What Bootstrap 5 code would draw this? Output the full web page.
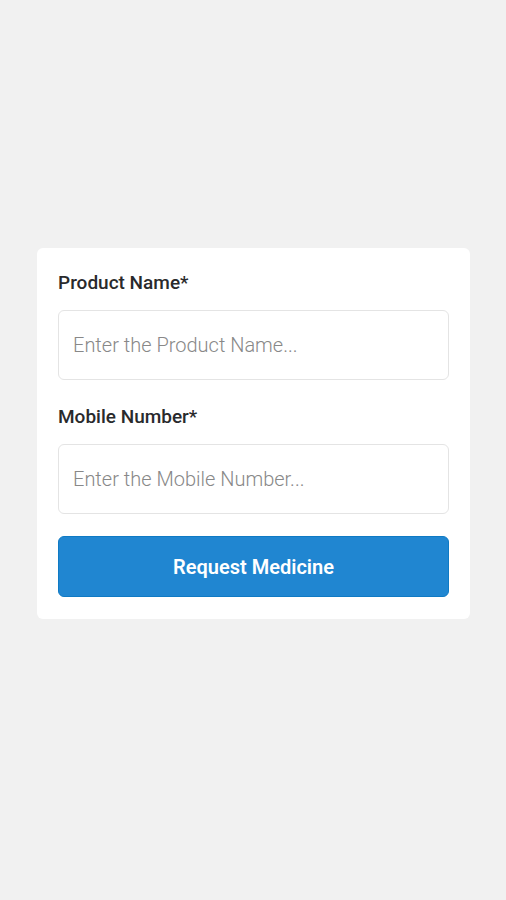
<!DOCTYPE html>
<html lang="en">
<head>
<meta charset="utf-8">
<meta name="viewport" content="width=device-width, initial-scale=1">
<title>Request Medicine</title>
<link rel="stylesheet" href="https://cdn.jsdelivr.net/npm/bootstrap@5.3.0/dist/css/bootstrap.min.css">
<style>
body { background: #f1f1f1; color: #292a2c; font-family: Roboto, "Liberation Sans", sans-serif; }
.page { padding: 248px 36px 0 37px; }
.request-card { padding: 20px 21px 22px; border-radius: 6px; }
.request-card .form-label { font-size: 19px; line-height: 30px; margin-bottom: 12px; font-weight: 500; color: #292a2c; }
.request-card .form-control { height: 70px; padding: 0 14px; font-size: 20px; font-weight: 300; border: 1px solid #e4e4e4; border-radius: 6px; }
.request-card .form-control::placeholder { color: #888; opacity: 1; }
.field { margin-bottom: 22px; }
.btn-request { height: 61px; font-size: 20px; font-weight: 600; border-radius: 6px; --bs-btn-color: #fff; --bs-btn-bg: #2086d1; --bs-btn-border-color: #0f7ac4; --bs-btn-hover-color: #fff; --bs-btn-hover-bg: #1a78bd; }
</style>
</head>
<body>
<main class="page min-vh-100">
  <form class="request-card bg-white">
    <div class="field">
      <label class="form-label d-block" for="product">Product Name*</label>
      <input class="form-control" id="product" type="text" placeholder="Enter the Product Name..." required>
    </div>
    <div class="field">
      <label class="form-label d-block" for="mobile">Mobile Number*</label>
      <input class="form-control" id="mobile" type="tel" placeholder="Enter the Mobile Number..." required>
    </div>
    <button class="btn btn-request w-100" type="submit">Request Medicine</button>
  </form>
</main>
<script src="https://cdn.jsdelivr.net/npm/bootstrap@5.3.0/dist/js/bootstrap.bundle.min.js"></script>
</body>
</html>
